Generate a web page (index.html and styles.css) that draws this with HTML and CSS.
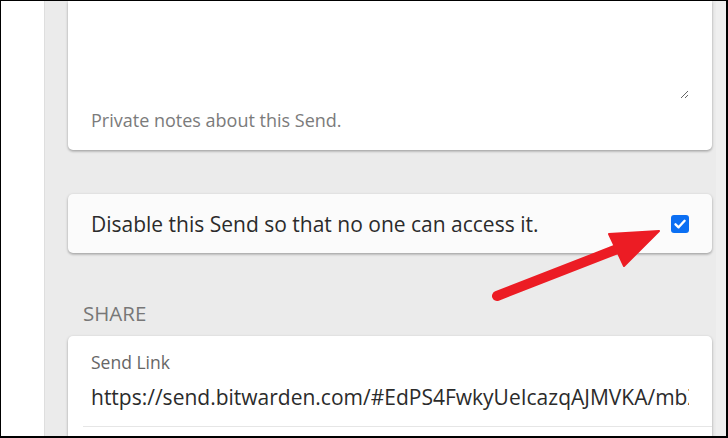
FILE: index.html
```html
<!DOCTYPE html>
<html lang="en">
<head>
<meta charset="utf-8">
<title>Send options</title>
<link rel="stylesheet" href="styles.css">
</head>
<body>
<div class="frame">
  <div class="sidebar"></div>
  <main class="main">
    <section class="card card-notes">
      <textarea class="notes" aria-label="Notes"></textarea>
      <p class="hint">Private notes about this Send.</p>
    </section>

    <section class="card card-toggle">
      <label class="toggle-label" for="disable">Disable this Send so that no one can access it.</label>
      <span class="check" id="disable" role="checkbox" aria-checked="true">
        <svg width="18" height="18" viewBox="0 0 18 18"><path d="M4.5 9.3 L7.6 12.3 L13.6 5.8" fill="none" stroke="#fff" stroke-width="2.4" stroke-linecap="round" stroke-linejoin="round"/></svg>
      </span>
    </section>

    <h2 class="section-title">SHARE</h2>

    <section class="card card-share">
      <div class="field">
        <div class="field-label">Send Link</div>
        <div class="field-value">https://send.bitwarden.com/#EdPS4FwkyUeIcazqAJMVKA/mbZ2qLtJ8kH</div>
      </div>
      <div class="divider"></div>
    </section>
  </main>
  <div class="track"></div>

  <svg class="arrow" width="728" height="438" viewBox="0 0 728 438">
    <line x1="497" y1="296" x2="620" y2="248" stroke="#ec1c24" stroke-width="10" stroke-linecap="round"/>
    <polygon points="659,231 609,234 624,266" fill="#ec1c24" stroke="#ec1c24" stroke-width="2" stroke-linejoin="round"/>
  </svg>
</div>
</body>
</html>
```

FILE: styles.css
```css
* { box-sizing: border-box; }

html, body {
  margin: 0;
  padding: 0;
  background: #fff;
}

body {
  font-family: "Open Sans", "Noto Sans", sans-serif;
  color: #333;
}

.frame {
  position: relative;
  width: 728px;
  height: 438px;
  border: 1px solid #000;
  border-right-width: 2px;
  border-bottom-width: 2px;
  display: flex;
  overflow: hidden;
  background: #fff;
}

.sidebar {
  width: 43px;
  flex: none;
  background: #fff;
}

.main {
  flex: 1;
  background: #ebebeb;
  border-left: 1px solid #dedede;
  padding: 0 4px 0 23px;
  display: flex;
  flex-direction: column;
  min-width: 0;
}

.track {
  width: 10px;
  flex: none;
  background: #efefef;
}

.card {
  background: #fff;
  border-radius: 5px;
  box-shadow: 0 1px 3px rgba(0, 0, 0, 0.28), 0 2px 2px rgba(0, 0, 0, 0.08);
  flex: none;
}

.card-notes {
  border-top-left-radius: 0;
  border-top-right-radius: 0;
  padding: 0 23px 18px 23px;
}

.notes {
  display: block;
  width: 100%;
  height: 98px;
  border: none;
  outline: none;
  resize: vertical;
  background: transparent;
  font-family: inherit;
  font-size: 20px;
  padding: 0;
  margin: 0;
}

.hint {
  margin: 9px 0 0 0;
  font-size: 18px;
  line-height: 24px;
  color: #7b7b7b;
}

.card-toggle {
  margin-top: 44px;
  background: #fbfbfb;
  padding: 16px 23px 15px 23px;
  display: flex;
  align-items: center;
  justify-content: space-between;
}

.toggle-label {
  font-size: 21px;
  line-height: 28px;
  color: #2b2b2b;
}

.check {
  width: 18px;
  height: 18px;
  border-radius: 3px;
  background: #0b6ff3;
  display: block;
  flex: none;
}

.check svg { display: block; }

.section-title {
  margin: 47px 0 9px 15px;
  font-size: 20.5px;
  line-height: 27px;
  font-weight: 400;
  color: #777;
}

.card-share {
  border-bottom-left-radius: 0;
  border-bottom-right-radius: 0;
  padding-top: 14px;
  flex: 1;
}

.field {
  padding: 0 23px;
}

.field-label {
  font-size: 17.5px;
  line-height: 24px;
  color: #666;
}

.field-value {
  margin-top: 9px;
  font-size: 21px;
  line-height: 28px;
  color: #2b2b2b;
  white-space: nowrap;
  overflow: hidden;
}

.divider {
  margin: 15px 0 0 15px;
  height: 1px;
  background: #e6e6e6;
}

.arrow {
  position: absolute;
  left: -1px;
  top: -1px;
  pointer-events: none;
}
```
